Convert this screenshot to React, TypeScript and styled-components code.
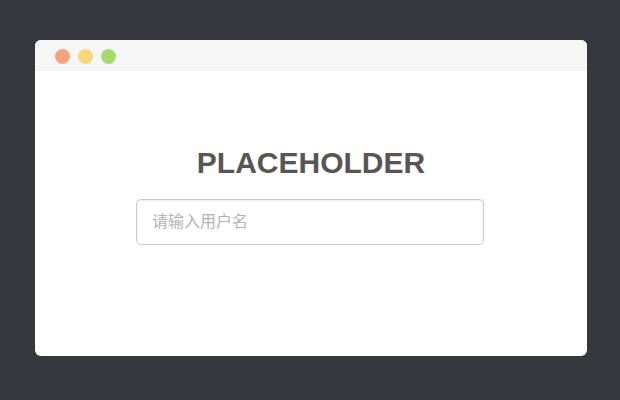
import styled, { createGlobalStyle } from "styled-components";

const GlobalStyle = createGlobalStyle`
  * {
    box-sizing: border-box;
  }
  html, body {
    margin: 0;
    padding: 0;
    background: #37383e;
  }
  body {
    font-family: "Liberation Sans", Arial, "Noto Sans CJK SC", sans-serif;
  }
`;

const Page = styled.div`
  width: 620px;
  height: 400px;
  padding: 40px 33px 44px 35px;
  display: flex;
`;

const Window = styled.div`
  flex: 1;
  display: flex;
  flex-direction: column;
  background: #fff;
  border-radius: 6px;
  overflow: hidden;
`;

const TitleBar = styled.div`
  height: 31px;
  background: #f6f6f6;
  display: flex;
  align-items: center;
  gap: 8px;
  padding: 2px 0 0 20px;
`;

const Dot = styled.span<{ color: string }>`
  width: 15px;
  height: 15px;
  border-radius: 50%;
  background: ${(props) => props.color};
`;

const Content = styled.div`
  flex: 1;
  display: flex;
  flex-direction: column;
  align-items: center;
  padding-top: 74px;
`;

const Heading = styled.h1`
  margin: 0 0 18px;
  font-size: 30px;
  line-height: 36px;
  font-weight: bold;
  color: #595555;
`;

const Input = styled.input`
  width: 348px;
  height: 46px;
  margin-left: -2px;
  padding: 0 15px;
  border: 1px solid #c9c9c9;
  border-radius: 5px;
  box-shadow: inset 0 1px 2px rgba(0, 0, 0, 0.08);
  font-family: "Liberation Sans", Arial, "Noto Sans CJK SC", sans-serif;
  font-size: 16px;
  color: #555;
  outline: none;
  &::placeholder {
    color: #b3b3b3;
  }
`;

function App() {
  return (
    <>
      <GlobalStyle />
      <Page>
        <Window>
          <TitleBar>
            <Dot color="#f7a27a" />
            <Dot color="#f8d77a" />
            <Dot color="#a6da6a" />
          </TitleBar>
          <Content>
            <Heading>PLACEHOLDER</Heading>
            <Input placeholder="请输入用户名" />
          </Content>
        </Window>
      </Page>
    </>
  );
}

export default App;
